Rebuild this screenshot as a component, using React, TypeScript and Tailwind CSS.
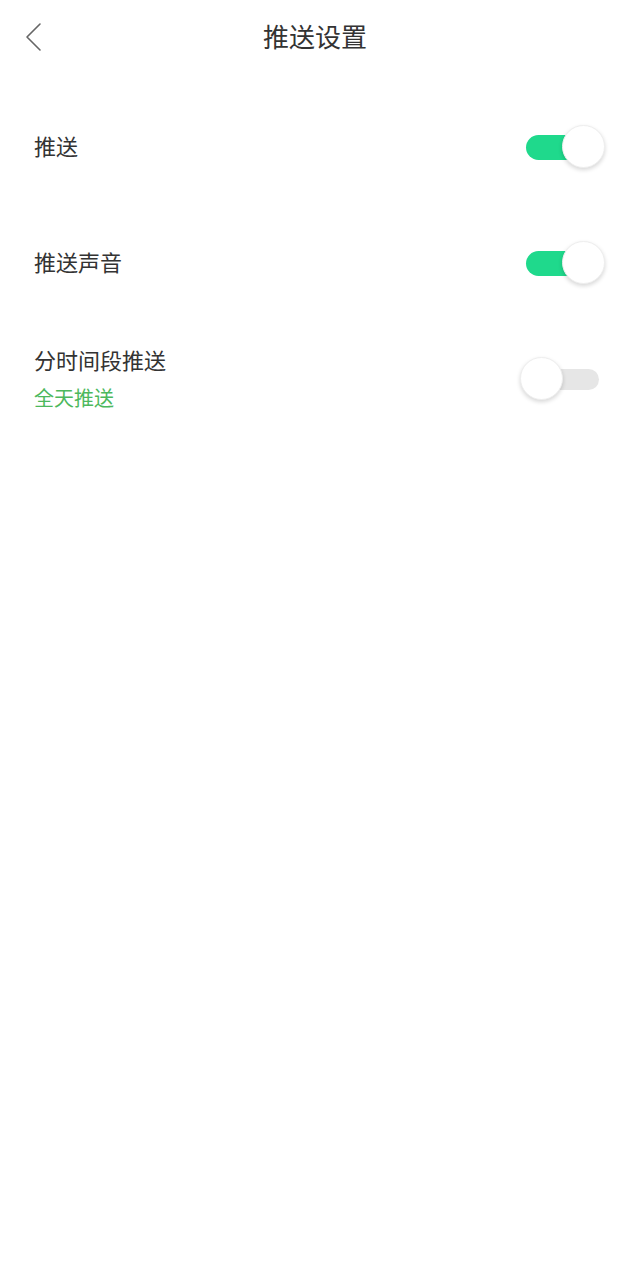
import React from "react";

function Toggle({ on }: { on: boolean }) {
  return (
    <div className="relative w-[86px] h-[48px] flex items-center">
      {/* track */}
      <div
        className={
          on
            ? "ml-[7px] w-[70px] h-[25px] rounded-full bg-[#1fd98c]"
            : "ml-[10px] w-[69px] h-[21px] rounded-full bg-[#e6e6e6]"
        }
      />
      {/* thumb */}
      <div
        className={
          "absolute top-[2px] w-[43px] h-[43px] rounded-full bg-white border border-[#eeeeee] shadow-[0_2px_4px_rgba(0,0,0,0.16)] " +
          (on ? "left-[43px]" : "left-0")
        }
      />
    </div>
  );
}

function Row({ label, sub, on }: { label: string; sub?: string; on: boolean }) {
  return (
    <div className="h-[116px] flex items-center justify-between pl-[34px] pr-[25px]">
      <div className="flex flex-col">
        <span className="text-[22px] leading-[30px] text-[#333333]">{label}</span>
        {sub && <span className="mt-[11px] text-[20px] leading-[26px] text-[#4cb85c]">{sub}</span>}
      </div>
      <div className={on ? "mt-[4px]" : "mr-[-1px] mt-[4px]"}>
        <Toggle on={on} />
      </div>
    </div>
  );
}

export default function App() {
  return (
    <div
      className="w-[630px] h-[1280px] bg-white"
      style={{ fontFamily: '"Noto Sans CJK SC", "Noto Sans", sans-serif' }}
    >
      {/* Header */}
      <div className="relative h-[70px] flex items-center justify-center">
        <svg
          className="absolute left-[22px] top-[20px]"
          width="24"
          height="34"
          viewBox="0 0 24 34"
          fill="none"
        >
          <path d="M18 4 L5 17 L18 30" stroke="#666666" strokeWidth="1.6" strokeLinecap="round" strokeLinejoin="round" />
        </svg>
        <h1 className="text-[26px] text-[#333333]">推送设置</h1>
      </div>

      <div className="mt-[17px]">
        <Row label="推送" on />
        <Row label="推送声音" on />
        <Row label="分时间段推送" sub="全天推送" on={false} />
      </div>
    </div>
  );
}
